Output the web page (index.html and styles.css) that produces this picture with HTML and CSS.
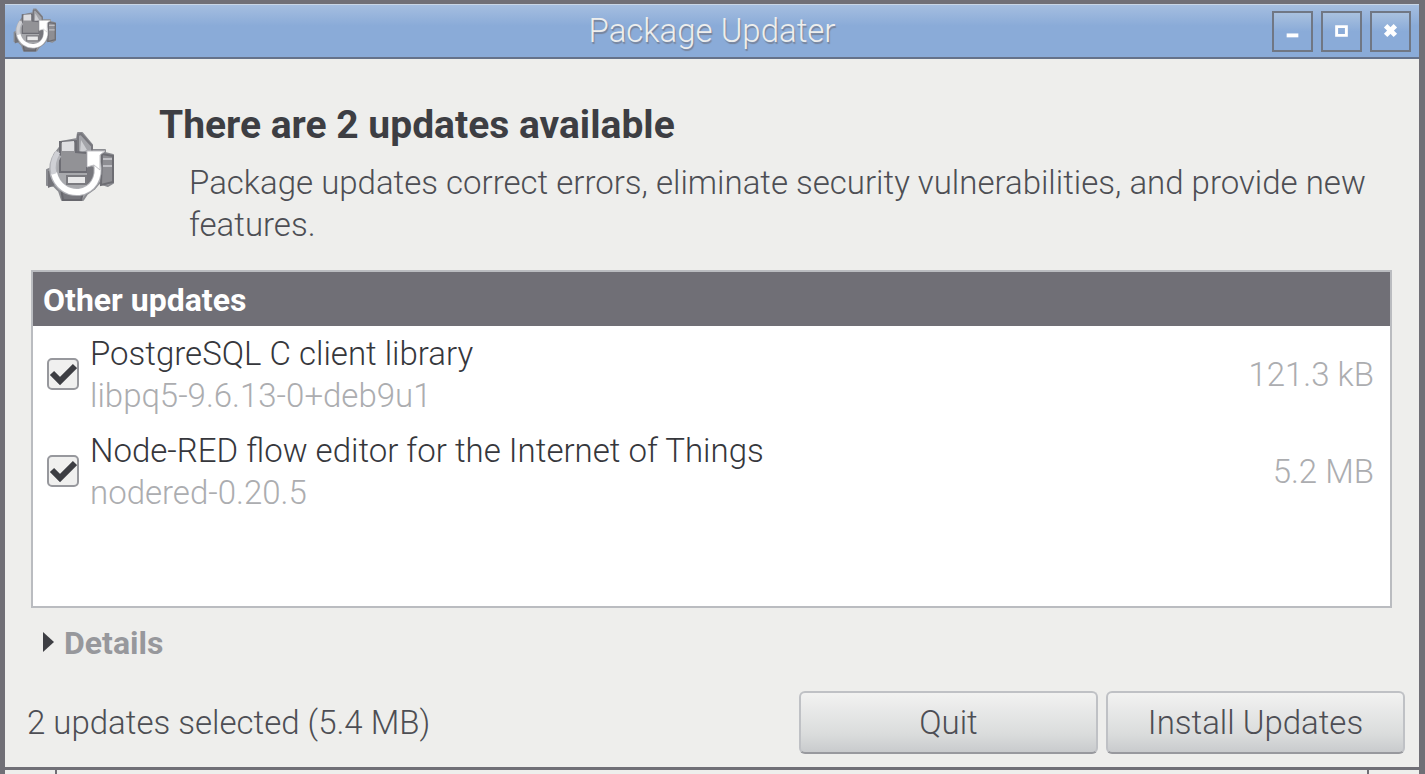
FILE: index.html
```html
<!DOCTYPE html>
<html lang="en">
<head>
<meta charset="utf-8">
<title>Package Updater</title>
<link rel="stylesheet" href="styles.css">
</head>
<body>
<svg class="defs" aria-hidden="true">
  <symbol id="updater" viewBox="0 0 74 74">
    <path d="M2 39l7-3V24l6-8 1-5 16-3 1-6h4l10 12v5l13 0v3l8 2v28l-5 3-9-3-5 6-7 5-4 6H17l-3-9-5-5-7-1z" fill="#a8a9ad" stroke="#8b8c91" stroke-width="2" stroke-linejoin="round"/>
    <path d="M3 40l7-3v17l-7 3z" fill="#737379"/>
    <path d="M33 4l3-1 11 12v12H33z" fill="#a3a4a9" stroke="#77777d" stroke-width="2"/>
    <path d="M36 9l6 10-7 3z" fill="#cdced2"/>
    <path d="M15 11l16-1v11l11 1v19H15z" fill="#929296" stroke="#6d6d74" stroke-width="2"/>
    <path d="M17 11l12-1v10H17z" fill="#dedee1"/>
    <path d="M42 33l10 5v10l-10 6z" fill="#77777d"/>
    <path d="M57 23l11 2v26l-12 3z" fill="#8e8e93" stroke="#6d6d73" stroke-width="2"/>
    <path d="M58 28h9M58 35h9" stroke="#bebec3" stroke-width="2"/>
    <path d="M22 45h19v8H22z" fill="#e9e9ea" stroke="#7b7b80" stroke-width="2"/>
    <path d="M16 58h23l-3 11H18z" fill="#77777d" stroke="#67676d" stroke-width="2"/>
    <path d="M13 23Q6 34 9 44c4 12 14 18 25 17 14-2 21-14 18-29" fill="none" stroke="#b1b2b7" stroke-width="8"/>
    <path d="M9 42c3 13 14 20 25 19 14-2 21-14 18-29" fill="none" stroke="#fff" stroke-width="6"/>
    <path d="M42 20h18l-5 4v15l-6-5-7 2z" fill="#fff" stroke="#c1c1c5"/>
    <path d="M13 21Q6 32 9 43" fill="none" stroke="#cfd0d5" stroke-width="5"/>
  </symbol>
</svg>
<div class="desktop">
  <main class="window">
    <header class="titlebar">
      <svg class="app-icon" aria-hidden="true"><use href="#updater"/></svg>
      <h1 class="title">Package Updater</h1>
      <div class="controls">
        <button class="control" aria-label="Minimize"><svg viewBox="0 0 38 38"><path d="M13 23h12" stroke="#fff" stroke-width="4"/></svg></button>
        <button class="control" aria-label="Maximize"><svg viewBox="0 0 38 38"><path d="M14 14h10v9H14z" fill="none" stroke="#fff" stroke-width="3"/></svg></button>
        <button class="control" aria-label="Close"><svg viewBox="0 0 38 38"><path d="M14 13l10 10M24 13L14 23" stroke="#fff" stroke-width="5"/></svg></button>
      </div>
    </header>
    <section class="intro">
      <svg class="intro-icon" aria-hidden="true"><use href="#updater"/></svg>
      <div class="intro-text">
        <h2 class="heading">There are 2 updates available</h2>
        <p class="description">Package updates correct errors, eliminate security vulnerabilities, and provide new features.</p>
      </div>
    </section>
    <section class="updates">
      <h3 class="group">Other updates</h3>
      <div class="row">
        <input class="check" type="checkbox" id="libpq" checked>
        <label class="package" for="libpq">PostgreSQL C client library<span class="version">libpq5-9.6.13-0+deb9u1</span></label>
        <span class="size">121.3 kB</span>
      </div>
      <div class="row">
        <input class="check" type="checkbox" id="nodered" checked>
        <label class="package" for="nodered">Node-RED flow editor for the Internet of Things<span class="version">nodered-0.20.5</span></label>
        <span class="size">5.2 MB</span>
      </div>
    </section>
    <details class="details">
      <summary class="summary"><svg class="arrow" viewBox="0 0 11 20" aria-hidden="true"><path d="M0 0l11 10L0 20z" fill="#3d3e43"/></svg>Details</summary>
    </details>
    <footer class="footer">
      <p class="status">2 updates selected (5.4 MB)</p>
      <button class="button">Quit</button>
      <button class="button">Install Updates</button>
    </footer>
  </main>
  <div class="behind"></div>
</div>
</body>
</html>
```
FILE: styles.css
```css
* { box-sizing: border-box; }
body {
  margin: 0;
  background: #706f76;
  color: #4d4e54;
  font: 300 33px/42px Roboto, sans-serif;
}
h1, h2, h3, p { margin: 0; }
button { font: inherit; color: inherit; }
.defs { display: none; }
.desktop {
  min-height: 100vh;
  display: flex;
  flex-direction: column;
  padding: 4px 6px 0 5px;
}
.window {
  flex: 1;
  display: flex;
  flex-direction: column;
  background: #eeeeec;
}
.titlebar {
  display: grid;
  grid-template-columns: 1fr auto 1fr;
  align-items: center;
  height: 55px;
  padding: 0 8px;
  background: linear-gradient(#a5bee0, #8aabd8 40%);
  border-top: 1px solid #c9d6e6;
  border-bottom: 2px solid #65728a;
}
.app-icon { width: 46px; height: 46px; }
.title {
  font-size: 33px;
  font-weight: 300;
  color: #eeeeec;
  text-shadow: 1px 2px 1px #77839a;
}
.controls {
  display: flex;
  justify-content: flex-end;
  gap: 8px;
}
.control {
  width: 41px;
  height: 41px;
  padding: 0;
  border: 2px solid #707784;
  background: linear-gradient(#a9c1df, #8aabd8 50%);
}
.control svg { display: block; width: 100%; height: 100%; }
.intro {
  display: flex;
  gap: 40px;
  padding: 45px 40px 24px 40px;
}
.intro-icon {
  flex: none;
  width: 74px;
  height: 74px;
  margin-top: 27px;
}
.heading {
  font-size: 39px;
  font-weight: 700;
  color: #3d3e43;
}
.description { padding: 16px 0 0 30px; }
.updates {
  flex: 1;
  margin: 0 27px 0 26px;
  background: #fff;
  border: 2px solid #babcc0;
}
.group {
  height: 54px;
  margin-bottom: 7px;
  padding: 7px 10px;
  background: #706f76;
  color: #fff;
  font-size: 32px;
  font-weight: 700;
}
.row {
  display: flex;
  align-items: center;
  margin-bottom: 13px;
  padding: 0 16px 0 14px;
}
.check {
  appearance: none;
  flex: none;
  width: 32px;
  height: 32px;
  margin: 0 11px 2px 0;
  border: 2px solid #97989d;
  border-radius: 5px;
  background: #f0f0ef;
}
.check:checked {
  background: #f0f0ef url("data:image/svg+xml,%3Csvg xmlns='http://www.w3.org/2000/svg' viewBox='0 0 28 28'%3E%3Cpath d='M3 13l8 8L26 6' fill='none' stroke='%233d3e43' stroke-width='6'/%3E%3C/svg%3E") center / 28px;
}
.package { flex: 1; color: #36373c; }
.version { display: block; color: #acadb0; }
.size { color: #acadb0; }
.details { padding: 14px 36px 0 38px; }
.summary {
  display: flex;
  align-items: center;
  gap: 10px;
  color: #97989c;
  font-size: 32px;
  font-weight: 700;
}
.arrow { width: 11px; height: 20px; margin-bottom: 2px; }
.footer {
  display: flex;
  align-items: center;
  gap: 8px;
  padding: 27px 14px 13px 22px;
}
.status { flex: 1; }
.button {
  width: 299px;
  height: 63px;
  border: 2px solid #bfc1c5;
  border-bottom-color: #98999e;
  border-radius: 6px;
  background: linear-gradient(#f2f2f1, #dadcdc 70%, #c9cbcd);
}
.behind {
  height: 7px;
  padding: 0 50px;
  border-top: 3px solid #706f76;
  background: linear-gradient(#706f76, #706f76) 50px 0 / 2px 100% no-repeat,
    linear-gradient(#706f76, #706f76) right 50px top 0 / 2px 100% no-repeat,
    #eeeeec;
}
```
